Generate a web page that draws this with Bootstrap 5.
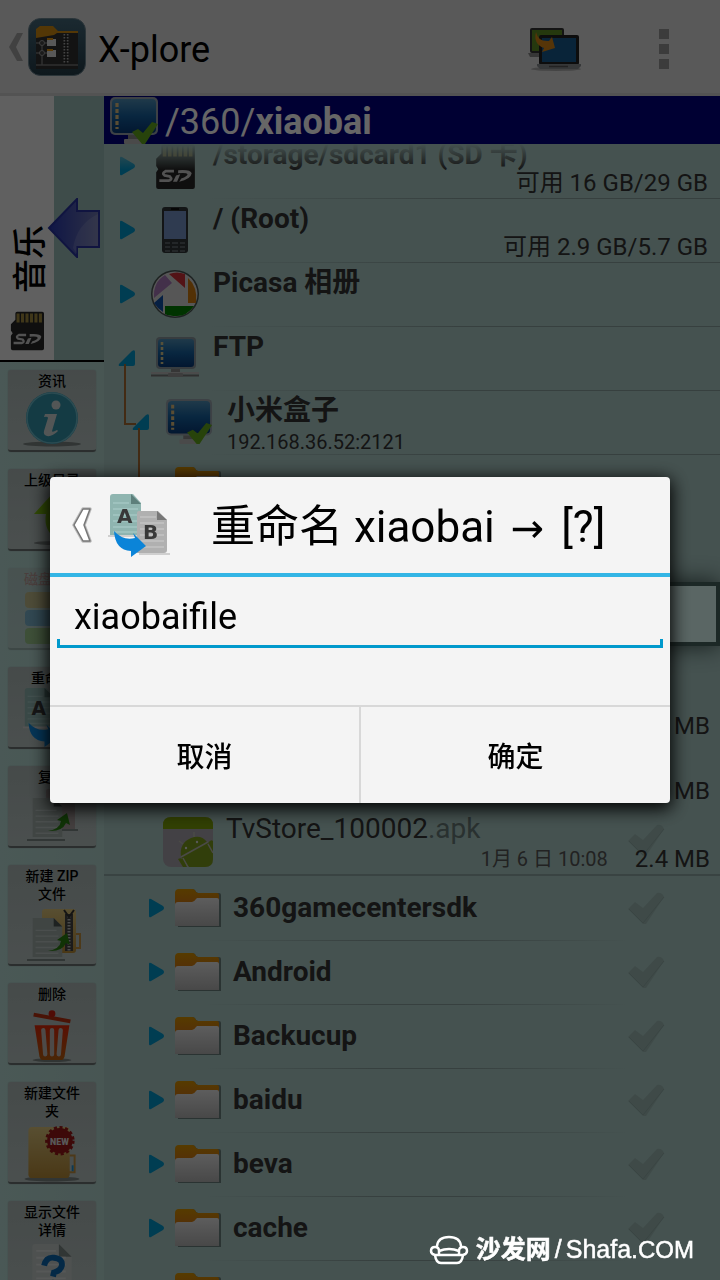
<!DOCTYPE html>
<html lang="zh-CN">
<head>
<meta charset="utf-8">
<meta name="viewport" content="width=device-width, initial-scale=1">
<title>X-plore</title>
<link href="https://cdn.jsdelivr.net/npm/bootstrap@5.3.0/dist/css/bootstrap.min.css" rel="stylesheet">
<style>
  body { font-family: Roboto, "Noto Sans CJK SC", sans-serif; color: #333; background: #adcdc8; }
  svg { display: block; flex: none; }
  button { font-family: inherit; }

  /* action bar */
  .app-bar { height: 96px; background: #dedede; border-bottom: 3px solid #cfcfcf; color: #000; }
  .app-title { font-size: 36px; line-height: 40px; font-weight: 400; padding: 6px 0 0 12px; }
  .plain-btn { border: 0; background: none; padding: 0; }
  .bar-btns { gap: 77px; padding-right: 51px; }

  /* left column */
  .side { width: 104px; flex: none; background: linear-gradient(90deg, #b8dcd6, #b4d6d0); }
  .other-pane { height: 266px; flex: none; background: #9bbeb9; border-bottom: 2px solid #000; }
  .pane-tab { width: 54px; background: #f0f0f0; color: #000; gap: 16px; }
  .pane-name { writing-mode: vertical-rl; text-orientation: sideways; transform: rotate(180deg); font-size: 34px; line-height: 48px; font-weight: 500; padding-right: 6px; }
  .swap-btn { margin-left: -7px; }
  .tool-list { gap: 17px; padding-top: 8px; }
  .tool { width: 88px; min-height: 82px; flex: none; border: 0; border-bottom: 2px solid #6c7473; border-radius: 3px; padding: 2px 14px 0;
    background: linear-gradient(#aebab8, #bac6c4); box-shadow: 0 0 1px #7c8886; color: #000; font-size: 14px; font-weight: 500; line-height: 18px; }
  .tool.two-line { min-height: 101px; }
  .tool:disabled { opacity: .4; color: #c04040; }

  /* file tree */
  .path-bar { height: 48px; flex: none; background: #000080; color: #fff; font-size: 36px; line-height: 52px; padding-left: 5px; gap: 6px; }
  .tree-view { background: #adcdc8; }
  .tree-view::before { content: ""; position: absolute; z-index: 2; top: 0; left: 0; right: 0; height: 26px; background: linear-gradient(#adcdc8, #adcdc800); }
  .tree-rows { margin-top: -10px; }
  .tree-row { height: 64px; flex: none; padding-right: 12px; gap: 14px; position: relative; }
  .tree-row::after { content: ""; position: absolute; left: 100px; right: 0; bottom: -1px; height: 1px; background: linear-gradient(90deg, transparent, #8aa09e 50%); }
  .tree-row.lv1 { padding-left: 13px; }
  .tree-row.lv2 { padding-left: 27px; }
  .tree-row.lv3 { padding-left: 42px; padding-right: 55px; gap: 8px; }
  .tree-row.lv3::after { right: 90px; background: linear-gradient(90deg, transparent, #8aa09e 40%, #8aa09e 60%, transparent); }
  .item-name { font-size: 28px; line-height: 42px; font-weight: 700; white-space: nowrap; }
  .lv3 .item-name { margin-left: 3px; }
  .item-info { font-size: 24px; line-height: 28px; color: #333; }
  .tree-row .item-info { margin-top: -7px; }
  .item-addr { font-size: 20px; line-height: 20px; }
  .picked { height: 64px; flex: none; border: 4px solid #486460; background: #e0fffa; box-shadow: 0 0 24px #304442; }
  .file-list { margin-top: 33px; border-bottom: 2px solid #8ea8a5; }
  .file-row { height: 65px; padding: 0 10px 0 59px; gap: 13px; position: relative; }
  .file-name { font-size: 28px; line-height: 40px; white-space: nowrap; }
  .file-ext { color: #687a78; }
  .file-date { font-size: 20px; line-height: 28px; color: #555; }
  .file-meta { gap: 27px; margin-top: -4px; }
  .tick-over { position: absolute; right: 55px; top: 14px; }
  .branch { position: absolute; border: 2px solid #a86c34; border-width: 0 0 2px 2px; }
  .branch-a { left: 20px; top: 38px; width: 12px; height: 61px; }
  .branch-b { left: 34px; top: 38px; width: 0; height: 90px; border-bottom: 0; }

  /* rename dialog */
  .modal-backdrop { --bs-backdrop-opacity: .6; }
  .rename-modal .modal-dialog { max-width: none; margin: 0 50px; min-height: 100%; }
  .rename-modal .modal-content { border: 0; border-radius: 4px; background: #f4f4f4; color: #000; box-shadow: 0 4px 18px 2px #000; overflow: hidden; }
  .rename-modal .modal-header { height: 100px; padding: 0 20px; border-bottom: 4px solid #33b5e5; border-radius: 0; gap: 40px; }
  .back-btn { gap: 13px; }
  .rename-title { font-size: 44px; line-height: 60px; white-space: nowrap; padding-top: 3px; }
  .rename-arrow { font-family: "DejaVu Sans", sans-serif; font-size: 40px; margin: 0 6px 0 5px; line-height: 1; }
  .rename-body { height: 128px; padding: 8px 7px; }
  .name-field { font-size: 36px; line-height: 48px; color: #000; padding: 8px 17px; height: 63px; background: none; border: 0; border-radius: 0; }
  .name-field:focus { background: none; box-shadow: none; }
  .name-line { position: relative; }
  .name-line::after { content: ""; position: absolute; left: 0; right: 0; bottom: 0; height: 9px; border: 3px solid #0099cc; border-top: 0; pointer-events: none; }
  .rename-actions { height: 98px; border-top: 2px solid #d8d8d8; }
  .rename-actions button { flex: 1 1 0; font-size: 28px; font-weight: 500; color: #000; border: 0; background: none; padding: 6px 0 0; }
  .rename-actions button + button { border-left: 2px solid #d8d8d8; }

  .watermark { position: fixed; z-index: 1100; right: 26px; bottom: 12px; color: #fff; font-family: "Liberation Sans", "Noto Sans CJK SC", sans-serif; font-size: 25px; line-height: 36px; gap: 7px; -webkit-text-stroke: .5px #fff; }
  .watermark .caps { font-size: 24px; }
  .watermark b { font-weight: 700; }
</style>
</head>
<body>
<svg width="0" height="0" class="position-absolute" aria-hidden="true">
  <defs>
    <linearGradient id="gScreen" x2="0" y2="1"><stop stop-color="#4f90b8"/><stop offset=".5" stop-color="#15609f"/><stop offset="1" stop-color="#083a78"/></linearGradient>
    <linearGradient id="gFolder" x2="0" y2="1"><stop stop-color="#e8e8e8"/><stop offset="1" stop-color="#b4b4b4"/></linearGradient>
    <linearGradient id="gOrange" x2="0" y2="1"><stop stop-color="#d89400"/><stop offset="1" stop-color="#d0701c"/></linearGradient>
    <linearGradient id="gYellow" x2="0" y2="1"><stop stop-color="#dcc47c"/><stop offset="1" stop-color="#b88c38"/></linearGradient>
    <linearGradient id="gRed" x2="0" y2="1"><stop stop-color="#e02808"/><stop offset="1" stop-color="#b86010"/></linearGradient>
    <linearGradient id="gArrow"><stop stop-color="#2838b0"/><stop offset="1" stop-color="#7078b0"/></linearGradient>
    <linearGradient id="gCase" x2="0" y2="1"><stop stop-color="#44687a"/><stop offset="1" stop-color="#243c48"/></linearGradient>
  </defs>
  <symbol id="closed" viewBox="0 0 16 20"><path d="M1 2q0-2 2-1l12 7q2 2 0 4l-12 7q-2 1-2-1z" fill="#0098cc"/></symbol>
  <symbol id="open" viewBox="0 0 18 18"><path d="M1 15L14 2q3-2 3 1v12q0 2-2 2H2q-2 0-1-2z" fill="#0098cc"/></symbol>
  <symbol id="tick" viewBox="0 0 38 34"><path d="M1 18l7-7 8 6L30 2q5-1 7 4L19 33h-3z" fill="#9dbab5"/><path d="M2 18l14 14L37 6" fill="none" stroke="#92aca8"/></symbol>
  <symbol id="folder" viewBox="0 0 48 40"><path d="M3 4q0-3 3-3h12q3 0 4 3l2 1h21q2 0 2 2v32H4z" fill="#28343280"/><path d="M1 5q0-4 4-4h13q3 0 4 3l2 1h19q2 0 2 2v14H1z" fill="url(#gOrange)"/><path d="M1 17q0-3 3-3h14q2 0 4-3l1-1h20q2 0 2 2v26H1z" fill="url(#gFolder)"/></symbol>
  <symbol id="sdcard" viewBox="0 0 38 44"><path d="M8 1h28q2 0 2 2v39q0 2-2 2H3q-2 0-2-2V28l2-3-2-3v-7l5-5V3q0-2 2-2z" fill="#262626"/><path d="M9 3v10M14 3v10M19 3v10M24 3v10M29 3v10M34 3v10" stroke="#a08a40" stroke-width="3.4"/><path d="M18 27H10q-4 2-1 4l5 1q3 3-1 4H4" fill="none" stroke="#ccc" stroke-width="2.600"/><path d="M22 26q12-1 13 3-1 6-12 8l2-3q6-2 6-4-1-2-9-1zM20 31l4-1-3 7h-4z" fill="#ccc"/></symbol>
  <symbol id="phone" viewBox="0 0 28 48"><rect x="1" y="1" width="26" height="46" rx="3" fill="#303638"/><rect x="3" y="5" width="22" height="28" fill="#7694c8"/><path d="M10 3h8" stroke="#111" stroke-width="2"/><path d="M4 37h5m2 0h6m2 0h5M4 41h5m2 0h6m2 0h5M4 45h5m2 0h6m2 0h5" stroke="#596064" stroke-width="2"/></symbol>
  <symbol id="picasa" viewBox="0 0 48 48"><circle cx="24" cy="24" r="24" fill="#4a5553"/><circle cx="24" cy="24" r="22.5" fill="#d8d8d8"/><path d="M18 4q8-3 16 0v14z" fill="#d03038"/><path d="M37 8q10 9 8 25h-8z" fill="#d07c10"/><path d="M14 36h29Q36 46 26 46q-8 0-12-2z" fill="#008000"/><path d="M3 33l9-8v17q-6-4-9-9z" fill="#1050a8"/><path d="M3 28Q2 12 14 5l7 8z" fill="#a878b8"/></symbol>
  <symbol id="ftp" viewBox="0 0 48 44"><rect x="5" y="1" width="40" height="32" rx="4" fill="#8b979d"/><rect x="7" y="3" width="36" height="28" rx="3" fill="url(#gScreen)"/><path d="M11 6v22" stroke="#d8c890" stroke-width="2.6" stroke-dasharray="3 2"/><path d="M20 33h9v5h-9z" fill="#888"/><path d="M0 37h48" stroke="#bbb" stroke-width="2"/><path d="M0 39.500h48" stroke="#777" stroke-width="2"/><rect x="17" y="37" width="15" height="4" rx="1" fill="#999"/></symbol>
  <symbol id="server" viewBox="0 0 50 50"><rect x="1" y="1" width="48" height="38" rx="5" fill="#98a4ac"/><rect x="3" y="3" width="44" height="34" rx="4" fill="url(#gScreen)"/><path d="M8 7v26" stroke="#e0c080" stroke-width="3.200" stroke-dasharray="4 2"/><path d="M19 39h14v4H19z" fill="#888"/><rect x="15" y="43" width="20" height="5" rx="1" fill="#b8b8b8"/><path d="M23 36l6-3 5 4 9-11 6 2-13 20h-3z" fill="#63a81c"/></symbol>
  <symbol id="pageG" viewBox="0 0 34 44"><path d="M2 1h22l9 9v32H2z" fill="#a0aca8"/><path d="M24 1v9h9z" fill="#4c5654"/><path d="M5 14h22M5 20h24M5 26h24M5 32h24M5 38h24" stroke="#b8c2c0" stroke-width="1.500"/></symbol>
  <symbol id="upArrow" viewBox="0 0 24 20"><path d="M1 19q12-2 13-10l-4-1L20 1l3 12-4-2Q15 20 1 19z" fill="#288010"/></symbol>
  <symbol id="copyIc" viewBox="0 0 60 54"><path d="M24 3q0-2 2-2h27v40H24z" fill="#a89c9c"/><use href="#pageG" x="8" y="9" width="34" height="42"/><path d="M5 52h38M40 42h16" stroke="#7c8886" stroke-width="2"/><use href="#upArrow" x="25" y="24" width="24" height="20"/></symbol>
  <symbol id="zipIc" viewBox="0 0 60 54"><rect x="20" y="1" width="34" height="44" rx="3" fill="url(#gYellow)"/><path d="M54 26h4v14h-4" fill="none" stroke="#c09040" stroke-width="2"/><use href="#pageG" x="8" y="9" width="34" height="42"/><path d="M47 6v37" stroke="#444" stroke-width="8"/><path d="M47 8v36" stroke="#bbb" stroke-width="3" stroke-dasharray="1.500 1.500"/><path d="M42 2l5 7 5-7" fill="none" stroke="#333" stroke-width="2"/><path d="M5 52h38" stroke="#7c8886" stroke-width="2"/><use href="#upArrow" x="25" y="24" width="24" height="20"/></symbol>
  <symbol id="renameIc" viewBox="0 0 64 64"><path d="M3 4q0-3 3-3h20l8 9v33H3z" fill="#8fb5b0"/><path d="M24 1v10h10z" fill="#5d7f7b"/><path d="M6 10h16M6 16h25M6 22h25M6 28h25M6 34h25M6 39h25" stroke="#a4c6c2" stroke-width="1.500"/><path d="M1 43h32M32 61h31" stroke="#cfcfcf" stroke-width="2"/><path d="M30 20q0-2 2-2h19l9 9v30q0 3-3 3H30z" fill="#b0b0b0"/><path d="M50 18v9h10z" fill="#777"/><path d="M33 24h16M33 30h24M33 36h24M33 42h24M33 48h24M33 54h24" stroke="#c2c2c2" stroke-width="1.500"/><text x="10" y="30" font-family="DejaVu Sans" font-size="20" font-weight="700" fill="#383838">A</text><text x="36" y="46" font-family="DejaVu Sans" font-size="20" font-weight="700" fill="#383838">B</text><path d="M7 38q9 10 21 7l-2-5 13 13-15 11v-6Q8 57 7 38z" fill="#0b84d8"/></symbol>
</svg>

<div class="vh-100 d-flex flex-column overflow-hidden">
  <header class="app-bar d-flex align-items-center flex-shrink-0">
    <button class="plain-btn d-flex align-items-center ps-2" aria-label="返回">
      <svg width="16" height="28" viewBox="0 0 16 28"><path d="M9 0h6L8 14l7 14H9L1 14z" fill="#a4a4a4"/></svg>
      <svg class="ms-1" width="58" height="58" viewBox="0 0 58 58"><rect x=".5" y=".5" width="57" height="57" rx="12" fill="url(#gCase)" stroke="#6c8490"/><path d="M8 11l4-3h13l5 5h20v14H8z" fill="#d08a10"/><path d="M8 20l18-3 3-2h21v36H8z" fill="#303030"/><path d="M8 25h6v22M8 35h6m3-10h3m-3 10h3M8 47h42" fill="none" stroke="#777" stroke-width="1.500"/><circle cx="14" cy="25" r="2.500" fill="#444" stroke="#999"/><circle cx="14" cy="35" r="2.500" fill="#444" stroke="#999"/><path d="M19 21h9v7h-9zM19 32h9v7h-9z" fill="#ddd"/><path d="M19 21h6M19 32h6" stroke="#e09410" stroke-width="2"/><path d="M38 16v30" stroke="#aaa" stroke-width="5" stroke-dasharray="1.500 1.500"/><path d="M38 16v30" stroke="#222" stroke-width="1.500"/></svg>
    </button>
    <h1 class="app-title mb-0 me-auto">X-plore</h1>
    <div class="bar-btns d-flex align-items-center">
      <button class="plain-btn pt-1" aria-label="切换窗格"><svg width="56" height="44" viewBox="0 0 56 44"><ellipse cx="30" cy="42" rx="25" ry="2" fill="#aaa"/><rect x="4" y="1" width="34" height="25" rx="2" fill="#333"/><rect x="6" y="3" width="30" height="21" fill="#5c8c24"/><path d="M2 26h14v4H4z" fill="#888"/><rect x="13" y="8" width="40" height="30" rx="2" fill="#222"/><rect x="16" y="11" width="34" height="24" fill="#185a90"/><path d="M11 37h44v2l-3 3H14l-3-3z" fill="#888c90"/><path d="M23 39.500h19" stroke="#555" stroke-width="1.500"/><path d="M10 5q2 10 13 9l3-4 3 11-13 4 2-4Q7 17 10 5z" fill="#d88414"/></svg></button>
      <button class="plain-btn pt-1" aria-label="更多"><svg width="10" height="40" viewBox="0 0 10 40"><path d="M0 0h10v10H0zM0 15h10v10H0zM0 30h10v10H0z" fill="#969696"/></svg></button>
    </div>
  </header>

  <div class="d-flex flex-grow-1 overflow-hidden">
    <aside class="side d-flex flex-column overflow-hidden">
      <div class="other-pane d-flex">
        <div class="pane-tab d-flex flex-column justify-content-end align-items-center pb-2">
          <span class="pane-name">音乐</span>
          <svg width="34" height="43"><use href="#sdcard"/></svg>
        </div>
        <button class="plain-btn swap-btn position-relative" aria-label="切换"><svg width="54" height="60" viewBox="0 0 54 60"><path d="M2 30L30 1v12h22v36H30v10z" fill="url(#gArrow)" stroke="#2834a0" stroke-width="2"/><path d="M26 50Q30 26 51 16v32H30v8z" fill="#fff" opacity=".12"/></svg></button>
      </div>
      <div class="tool-list d-flex flex-column align-items-center">
        <button class="tool d-flex flex-column align-items-center">资讯<svg width="60" height="58" viewBox="0 0 60 58"><ellipse cx="30" cy="54" rx="29" ry="2.500" fill="#7c8483"/><circle cx="30" cy="28" r="26" fill="#3494aa"/><circle cx="30" cy="28" r="25" fill="none" stroke="#6cbccc" stroke-width="1.500"/><circle cx="34" cy="15" r="4.500" fill="#d0d8d8"/><path d="M23 24h12l-5 17q0 2 5-1l1 1q-6 6-11 5-4-1-3-5l4-13q0-2-4-1z" fill="#d0d8d8"/></svg></button>
        <button class="tool d-flex flex-column align-items-center">上级目录<svg width="60" height="58" viewBox="0 0 60 58"><ellipse cx="34" cy="54" rx="22" ry="2" fill="#7c8483"/><path d="M12 25L32 3l20 22h-10q1 18-5 26-16-8-13-26z" fill="#7cbc10"/></svg></button>
        <button class="tool d-flex flex-column align-items-center" disabled>磁盘映射<svg width="60" height="58" viewBox="0 0 60 58"><rect x="3" y="4" width="54" height="16" rx="4" fill="#d09020"/><rect x="3" y="22" width="54" height="16" rx="4" fill="#2078c0"/><rect x="3" y="40" width="54" height="16" rx="4" fill="#70a820"/></svg></button>
        <button class="tool d-flex flex-column align-items-center">重命名<svg width="60" height="60"><use href="#renameIc"/></svg></button>
        <button class="tool d-flex flex-column align-items-center">复制<svg width="60" height="58"><use href="#copyIc"/></svg></button>
        <button class="tool two-line d-flex flex-column align-items-center">新建 ZIP 文件<svg class="mt-1" width="60" height="56"><use href="#zipIc"/></svg></button>
        <button class="tool d-flex flex-column align-items-center">删除<svg width="60" height="60" viewBox="0 0 60 62"><ellipse cx="30" cy="59" rx="20" ry="2" fill="#7c8483"/><path d="M12 23h36l-5 32q-1 4-4 4H21q-3 0-4-4z" fill="url(#gRed)"/><path d="M21 28l2 25M30 28v25M39 28l-2 25" stroke="#c0b8b4" stroke-width="4.500" stroke-linecap="round"/><path d="M11 12l38 7" stroke="#b83010" stroke-width="4"/><circle cx="30" cy="11" r="3.500" fill="#c82010"/></svg></button>
        <button class="tool two-line d-flex flex-column align-items-center">新建文件夹<svg class="mt-1" width="60" height="58" viewBox="0 0 60 59"><ellipse cx="30" cy="56" rx="28" ry="2.500" fill="#7c8483"/><rect x="6" y="3" width="42" height="52" rx="4" fill="url(#gYellow)"/><path d="M48 32h5v17h-6" fill="none" stroke="#c09040" stroke-width="2"/><path d="M51 42v6" stroke="#2090d0" stroke-width="2"/><circle cx="38" cy="17" r="13" fill="#981818"/><circle cx="38" cy="17" r="13" fill="none" stroke="#981818" stroke-width="4" stroke-dasharray="3 2.500"/><text x="28" y="21" font-size="9" font-weight="900" fill="#ddd">NEW</text></svg></button>
        <button class="tool two-line d-flex flex-column align-items-center">显示文件详情<svg class="mt-1" width="60" height="58" viewBox="0 0 60 59"><path d="M10 4q0-3 3-3h24l13 13v43H10z" fill="#c4cac8"/><path d="M37 1v13h13z" fill="#7c8886"/><path d="M14 8h20M14 15h30M14 22h30M14 29h30M14 36h30" stroke="#d6dcda" stroke-width="2"/><path d="M22 23q2-9 10-8 9 1 8 8-1 5-8 7l-1 4" fill="none" stroke="#0a68b0" stroke-width="6"/><circle cx="31" cy="41" r="3.500" fill="#0a68b0"/></svg></button>
      </div>
    </aside>

    <main class="flex-grow-1 d-flex flex-column overflow-hidden">
      <div class="path-bar d-flex overflow-hidden">
        <svg width="50" height="50"><use href="#server"/></svg>
        <span>/360/<b>xiaobai</b></span>
      </div>
      <div class="tree-view flex-grow-1 overflow-hidden position-relative">
        <div class="tree-rows d-flex flex-column">
          <div class="tree-row lv1 d-flex align-items-center"><svg width="20" height="20"><use href="#closed"/></svg><svg width="48" height="46"><use href="#sdcard"/></svg>
            <div class="flex-grow-1 align-self-start"><div class="item-name">/storage/sdcard1 (SD 卡)</div><div class="item-info text-end">可用 16 GB/29 GB</div></div></div>
          <div class="tree-row lv1 d-flex align-items-center"><svg width="20" height="20"><use href="#closed"/></svg><svg width="48" height="48"><use href="#phone"/></svg>
            <div class="flex-grow-1 align-self-start"><div class="item-name">/ (Root)</div><div class="item-info text-end">可用 2.9 GB/5.7 GB</div></div></div>
          <div class="tree-row lv1 d-flex align-items-center"><svg width="20" height="20"><use href="#closed"/></svg><svg width="48" height="48"><use href="#picasa"/></svg>
            <div class="item-name align-self-start">Picasa 相册</div></div>
          <div class="tree-row lv1 d-flex align-items-center"><i class="branch branch-a"></i><svg width="20" height="18"><use href="#open"/></svg><svg width="48" height="44"><use href="#ftp"/></svg>
            <div class="item-name align-self-start">FTP</div></div>
          <div class="tree-row lv2 d-flex align-items-center"><i class="branch branch-b"></i><svg width="20" height="18"><use href="#open"/></svg><svg width="48" height="48"><use href="#server"/></svg>
            <div class="align-self-start"><div class="item-name">小米盒子</div><div class="item-addr">192.168.36.52:2121</div></div></div>
          <div class="tree-row lv3 d-flex align-items-center"><svg width="20" height="20"><use href="#closed"/></svg><svg width="48" height="40"><use href="#folder"/></svg></div>
          <div class="tree-row lv3"></div>
          <div class="picked"></div>
          <div class="file-list">
            <div class="file-row d-flex align-items-end justify-content-end"><span class="item-info pb-1">3.1 MB</span></div>
            <div class="file-row d-flex align-items-end justify-content-end"><span class="item-info pb-1">2.8 MB</span></div>
            <div class="file-row d-flex">
              <svg class="tick-over" width="38" height="34"><use href="#tick"/></svg>
              <svg class="mt-2" width="50" height="50" viewBox="0 0 50 50"><rect width="50" height="50" rx="8" fill="#a8a4ac"/><path d="M0 12V8q0-8 8-8h34q8 0 8 8v4z" fill="#7ca008"/><path d="M18 40q-2-14 10-19 10-4 16 4l6 8v9q0 8-8 8H26z" fill="#7c9c1c"/><path d="M15 42q4-2 7 2l2 6h-4zM45 26q3-4 5-2v10z" fill="#7c9c1c"/><path d="M18 40l27-15M31 20v-5M20 27l-4-3M20 41l5 9M45 27l5 9" stroke="#b8b8b0" stroke-width="1.500"/><circle cx="23" cy="31" r="1.200" fill="#ddd"/><circle cx="34" cy="25" r="1.200" fill="#ddd"/></svg>
              <div class="flex-grow-1 position-relative"><div class="file-name">TvStore_100002<span class="file-ext">.apk</span></div>
                <div class="file-meta d-flex justify-content-end align-items-center"><span class="file-date">1月 6 日 10:08</span><span class="item-info">2.4 MB</span></div></div>
            </div>
          </div>
          <div class="tree-row lv3 d-flex align-items-center"><svg width="20" height="20"><use href="#closed"/></svg><svg width="48" height="40"><use href="#folder"/></svg><div class="item-name me-auto">360gamecentersdk</div><svg width="38" height="34"><use href="#tick"/></svg></div>
          <div class="tree-row lv3 d-flex align-items-center"><svg width="20" height="20"><use href="#closed"/></svg><svg width="48" height="40"><use href="#folder"/></svg><div class="item-name me-auto">Android</div><svg width="38" height="34"><use href="#tick"/></svg></div>
          <div class="tree-row lv3 d-flex align-items-center"><svg width="20" height="20"><use href="#closed"/></svg><svg width="48" height="40"><use href="#folder"/></svg><div class="item-name me-auto">Backucup</div><svg width="38" height="34"><use href="#tick"/></svg></div>
          <div class="tree-row lv3 d-flex align-items-center"><svg width="20" height="20"><use href="#closed"/></svg><svg width="48" height="40"><use href="#folder"/></svg><div class="item-name me-auto">baidu</div><svg width="38" height="34"><use href="#tick"/></svg></div>
          <div class="tree-row lv3 d-flex align-items-center"><svg width="20" height="20"><use href="#closed"/></svg><svg width="48" height="40"><use href="#folder"/></svg><div class="item-name me-auto">beva</div><svg width="38" height="34"><use href="#tick"/></svg></div>
          <div class="tree-row lv3 d-flex align-items-center"><svg width="20" height="20"><use href="#closed"/></svg><svg width="48" height="40"><use href="#folder"/></svg><div class="item-name me-auto">cache</div><svg width="38" height="34"><use href="#tick"/></svg></div>
          <div class="tree-row lv3 d-flex align-items-center"><svg width="20" height="20"><use href="#closed"/></svg><svg width="48" height="40"><use href="#folder"/></svg></div>
        </div>
      </div>
    </main>
  </div>
</div>

<div class="modal-backdrop show"></div>
<div class="modal rename-modal d-block" role="dialog" aria-labelledby="renameTitle">
  <div class="modal-dialog modal-dialog-centered">
    <form class="modal-content">
      <div class="modal-header justify-content-start">
        <button type="button" class="plain-btn back-btn d-flex align-items-center" aria-label="返回">
          <svg width="24" height="38" viewBox="0 0 24 38"><path d="M13 3h7l-6 16 6 16h-7L4 19z" fill="#fff" stroke="#bbb" stroke-width="3.500" stroke-linejoin="round"/><path d="M13 3h7l-6 16 6 16h-7L4 19z" fill="#fff" stroke="#777" stroke-width="1.500" stroke-linejoin="round"/></svg>
          <svg width="64" height="64"><use href="#renameIc"/></svg>
        </button>
        <h2 class="rename-title mb-0 fw-normal" id="renameTitle">重命名 xiaobai <span class="rename-arrow">→</span> [?]</h2>
      </div>
      <div class="rename-body">
        <div class="name-line"><input type="text" class="form-control name-field" value="xiaobaifile" aria-label="名称"></div>
      </div>
      <div class="rename-actions d-flex">
        <button type="button">取消</button>
        <button type="submit">确定</button>
      </div>
    </form>
  </div>
</div>

<div class="watermark d-flex align-items-center">
  <svg width="40" height="30" viewBox="0 0 40 30" fill="none" stroke="#fff" stroke-width="2.500"><path d="M8 11Q9 2 20 2t12 9M10 16q10-4 20 0M6 20q-4-1-4-4 0-4 4-4 4 0 4 4v4h20v-4q0-4 4-4 4 0 4 4 0 3-4 4zM6 20q1 8 6 8h16q5 0 6-8"/></svg>
  <div><b>沙发网</b><span class="mx-1">/</span>Shafa.<span class="caps">COM</span></div>
</div>
<script src="https://cdn.jsdelivr.net/npm/bootstrap@5.3.0/dist/js/bootstrap.bundle.min.js"></script>
</body>
</html>
